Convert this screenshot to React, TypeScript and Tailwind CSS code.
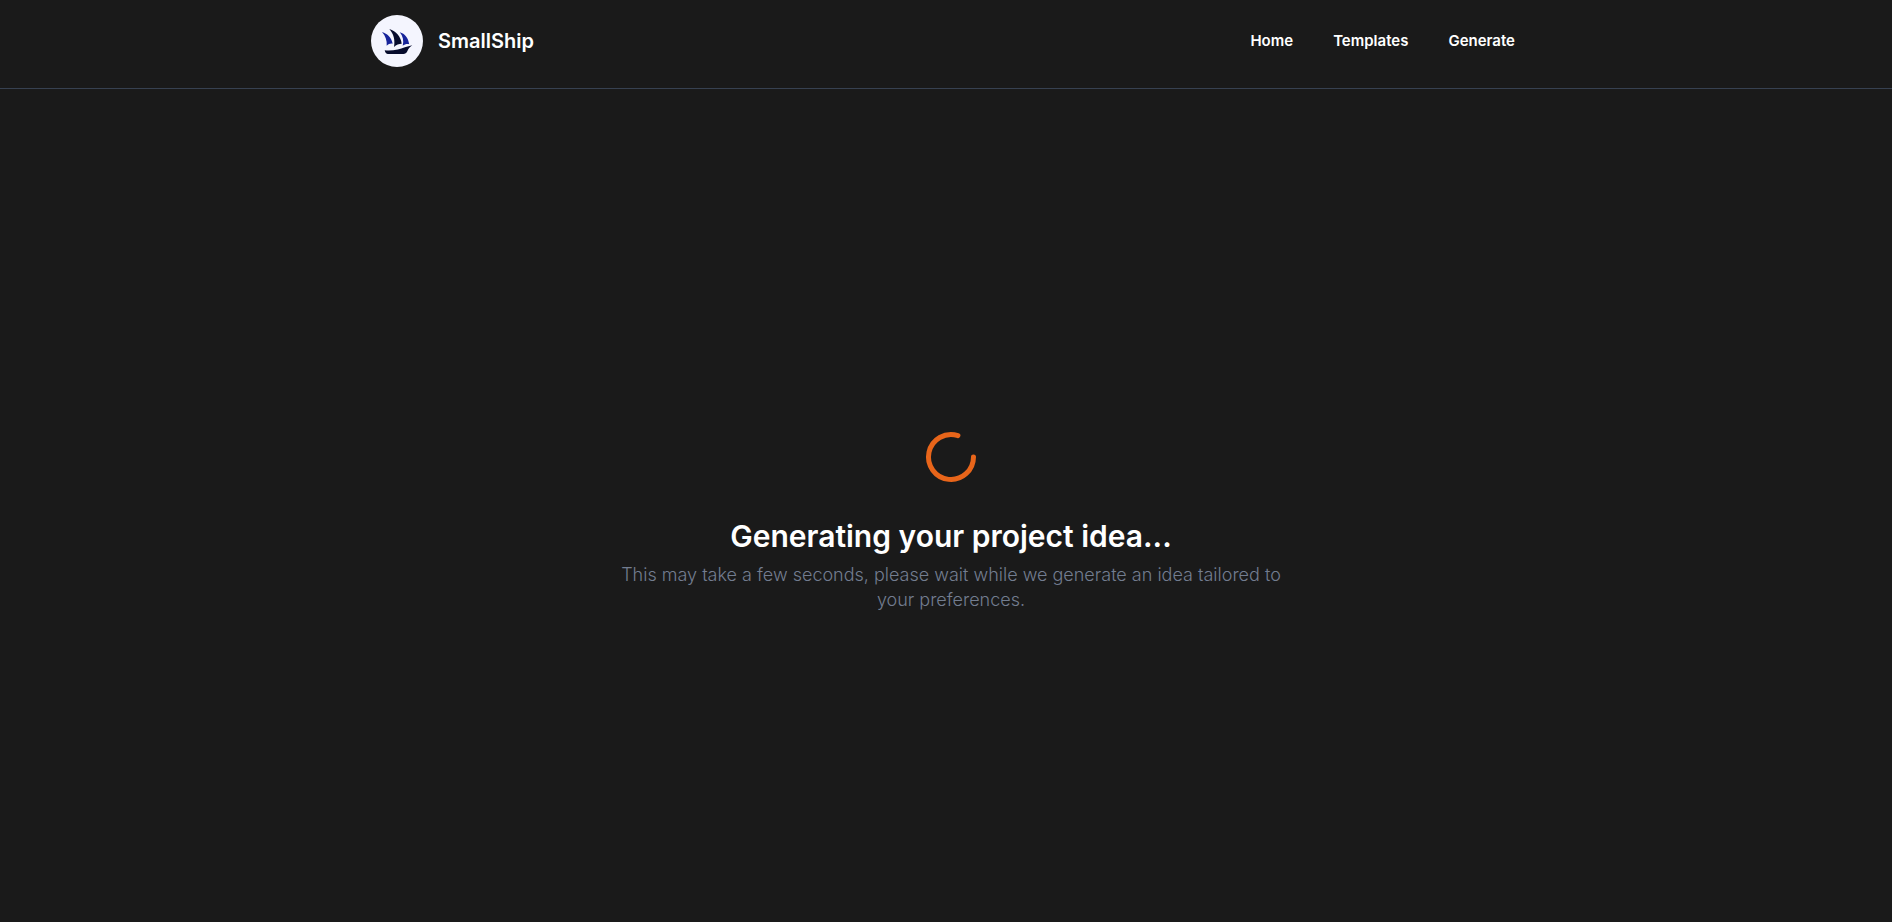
import { LoaderCircle } from "lucide-react";

const links = [
  { label: "Home", href: "/" },
  { label: "Templates", href: "/templates" },
  { label: "Generate", href: "/generate" },
];

function Logo() {
  return (
    <svg viewBox="0 0 52 52" className="size-[52px]" aria-hidden="true">
      <circle cx="26" cy="26" r="26" fill="#f4f5fe" />
      <path
        d="M11 17c5.500 1.800 9.500 5.500 10.700 11.700-2.200-.4-4.200.3-6 2C16.200 25.500 14.500 21 11 17Z"
        fill="#17249a"
      />
      <path
        d="M28.800 17.300c5.200 1.500 8.400 5.500 9.400 12-2.200-.6-4.500 0-6.500 1.400C33 25.500 31.900 21 28.800 17.300Z"
        fill="#17249a"
      />
      <path
        d="M18.300 14c7 2 11.500 7.500 12.400 14.700-2.700 0-5.400 1.100-7.700 3.300C24.200 25 22.800 19 18.300 14Z"
        fill="#060b2c"
      />
      <path
        d="M13.700 35.200c4 .8 8.500.2 13.100-.7 4.700-1 9.500-3.200 14.500-4.200-2.400 1.500-3.700 3.300-5 5.900-.9 1.700-2 2.800-3.900 2.800H17c-1.700 0-2.700-1.300-3.300-3.800Z"
        fill="#060b2c"
      />
    </svg>
  );
}

function Header() {
  return (
    <header className="border-b border-[#374151]">
      <div className="mx-auto flex h-22 max-w-[1150px] items-start justify-between pt-[15px]">
        <a href="/" className="flex items-center gap-[15px] text-xl font-semibold">
          <Logo />
          SmallShip
        </a>
        <nav className="flex h-[52px] items-center gap-10 pr-1.5 text-[15px] font-semibold">
          {links.map((link) => (
            <a key={link.href} href={link.href}>
              {link.label}
            </a>
          ))}
        </nav>
      </div>
    </header>
  );
}

export default function App() {
  return (
    <div className="flex min-h-screen flex-col bg-[#1a1a1a] font-['Inter',sans-serif] text-white">
      <Header />
      <main className="flex grow flex-col items-center pt-[338px] pl-2.5 text-center">
        <LoaderCircle className="size-[60px] text-[#e8651a]" />
        <h1 className="mt-[31px] text-3xl font-semibold">
          Generating your project idea...
        </h1>
        <p className="mt-2 max-w-[670px] text-lg leading-[25px] font-light text-[#737d90]">
          This may take a few seconds, please wait while we generate an idea
          tailored to your preferences.
        </p>
      </main>
    </div>
  );
}
